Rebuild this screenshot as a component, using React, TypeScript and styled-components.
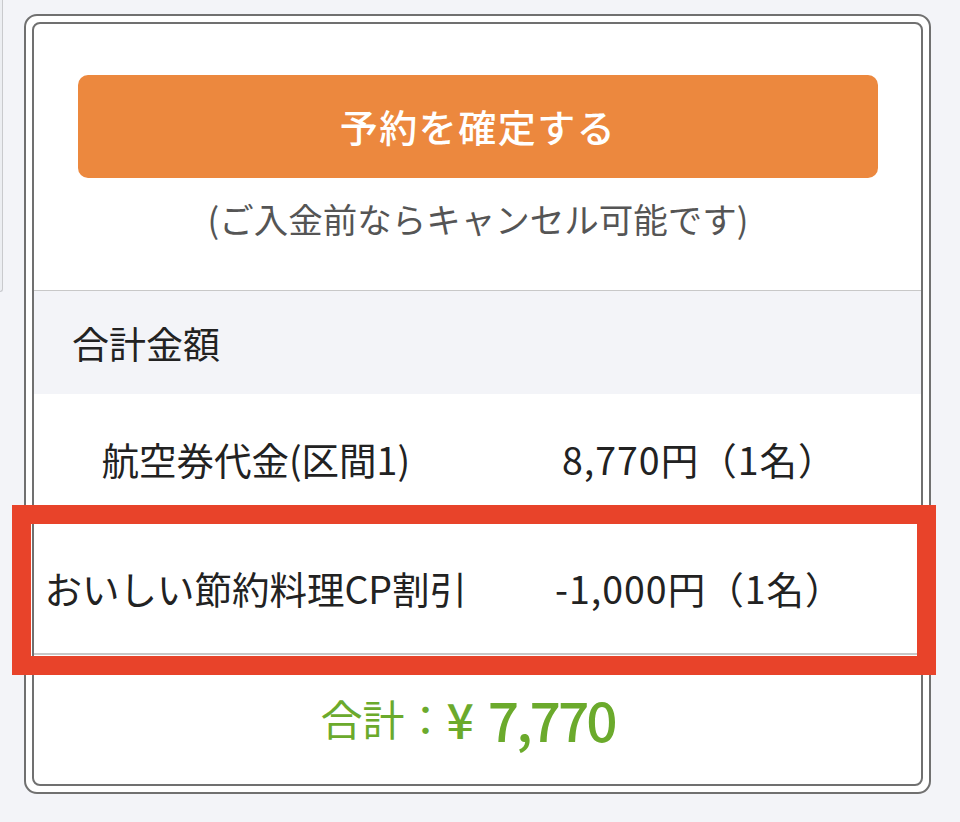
import React from "react";
import styled, { createGlobalStyle } from "styled-components";

const GlobalStyle = createGlobalStyle`
    html, body {
        margin: 0;
        padding: 0;
        background: #f3f4f8;
    }

    body {
        font-family: "Noto Sans CJK JP", "Noto Sans", sans-serif;
        color: #222;
    }
`;

const Page = styled.div`
    position: relative;
    width: 960px;
    height: 822px;
    display: flex;
    align-items: flex-start;
    overflow: hidden;
`;

const SideStub = styled.div`
    width: 2px;
    height: 291px;
    flex: none;
    background: #eceef2;
    border-right: 1px solid #c9cacd;
    border-bottom: 1px solid #c9cacd;
    border-bottom-right-radius: 6px;
`;

const Card = styled.div`
    margin: 14px 0 0 21px;
    width: 907px;
    height: 780px;
    box-sizing: border-box;
    padding: 6px;
    border: 2px solid #707070;
    border-radius: 13px;
    background: #fff;
`;

const Inner = styled.div`
    height: 100%;
    box-sizing: border-box;
    border: 2px solid #707070;
    border-radius: 8px;
    display: flex;
    flex-direction: column;
    overflow: hidden;
`;

const Confirm = styled.section`
    height: 267px;
    flex: none;
    border-bottom: 1px solid #c8c8c8;
    display: flex;
    flex-direction: column;
    align-items: center;
    padding: 51px 43px 0 44px;
    box-sizing: border-box;
`;

const ConfirmButton = styled.button`
    width: 100%;
    height: 103px;
    border: none;
    border-radius: 10px;
    background: #ec883e;
    color: #fff;
    font-family: inherit;
    font-size: 38px;
    font-weight: 500;
    letter-spacing: 1.5px;
    padding-bottom: 4px;
    cursor: pointer;
`;

const Note = styled.p`
    margin: 16px 0 0;
    font-size: 34.5px;
    color: #555;
    line-height: 48px;
`;

const SectionHead = styled.div`
    height: 103px;
    flex: none;
    background: #f3f4f8;
    display: flex;
    align-items: center;
    padding-left: 38px;
    font-size: 37px;
    color: #222;
`;

const Row = styled.div<{ $height: number; $divider?: boolean }>`
    height: ${(p) => p.$height}px;
    flex: none;
    box-sizing: border-box;
    display: grid;
    grid-template-columns: 1fr 1fr;
    align-items: center;
    border-bottom: ${(p) => (p.$divider ? "2px solid #c8c8c8" : "none")};
    font-size: 37.5px;
    color: #222;
`;

const Cell = styled.div<{ $spread?: boolean }>`
    text-align: center;
    white-space: nowrap;
    letter-spacing: ${(p) => (p.$spread ? "1px" : "0")};
`;

const Total = styled.div`
    flex: 1;
    display: flex;
    align-items: center;
    justify-content: center;
    color: #6baa2c;
    padding: 0 20px 4px 0;
`;

const TotalLabel = styled.span`
    font-size: 42px;
`;

const Yen = styled.span`
    font-size: 48px;
    font-weight: 500;
    margin-right: 14px;
`;

const TotalAmount = styled.span`
    font-size: 55px;
    font-weight: 500;
    letter-spacing: -3px;
`;

const Highlight = styled.div`
    position: absolute;
    left: 12px;
    top: 505px;
    width: 924px;
    height: 170px;
    box-sizing: border-box;
    border: 19px solid #e8432a;
    pointer-events: none;
`;

const items = [
    { label: "航空券代金(区間1)", value: "8,770円（1名）", height: 128 },
    { label: "おいしい節約料理CP割引", value: "-1,000円（1名）", height: 133, divider: true },
];

export default function App() {
    return (
        <>
            <GlobalStyle />
            <Page>
                <SideStub />
                <Card>
                    <Inner>
                        <Confirm>
                            <ConfirmButton>予約を確定する</ConfirmButton>
                            <Note>(ご入金前ならキャンセル可能です)</Note>
                        </Confirm>
                        <SectionHead>合計金額</SectionHead>
                        {items.map((item) => (
                            <Row key={item.label} $height={item.height} $divider={item.divider}>
                                <Cell>{item.label}</Cell>
                                <Cell $spread>{item.value}</Cell>
                            </Row>
                        ))}
                        <Total>
                            <TotalLabel>合計：</TotalLabel>
                            <Yen>¥</Yen>
                            <TotalAmount>7,770</TotalAmount>
                        </Total>
                    </Inner>
                </Card>
                <Highlight />
            </Page>
        </>
    );
}
